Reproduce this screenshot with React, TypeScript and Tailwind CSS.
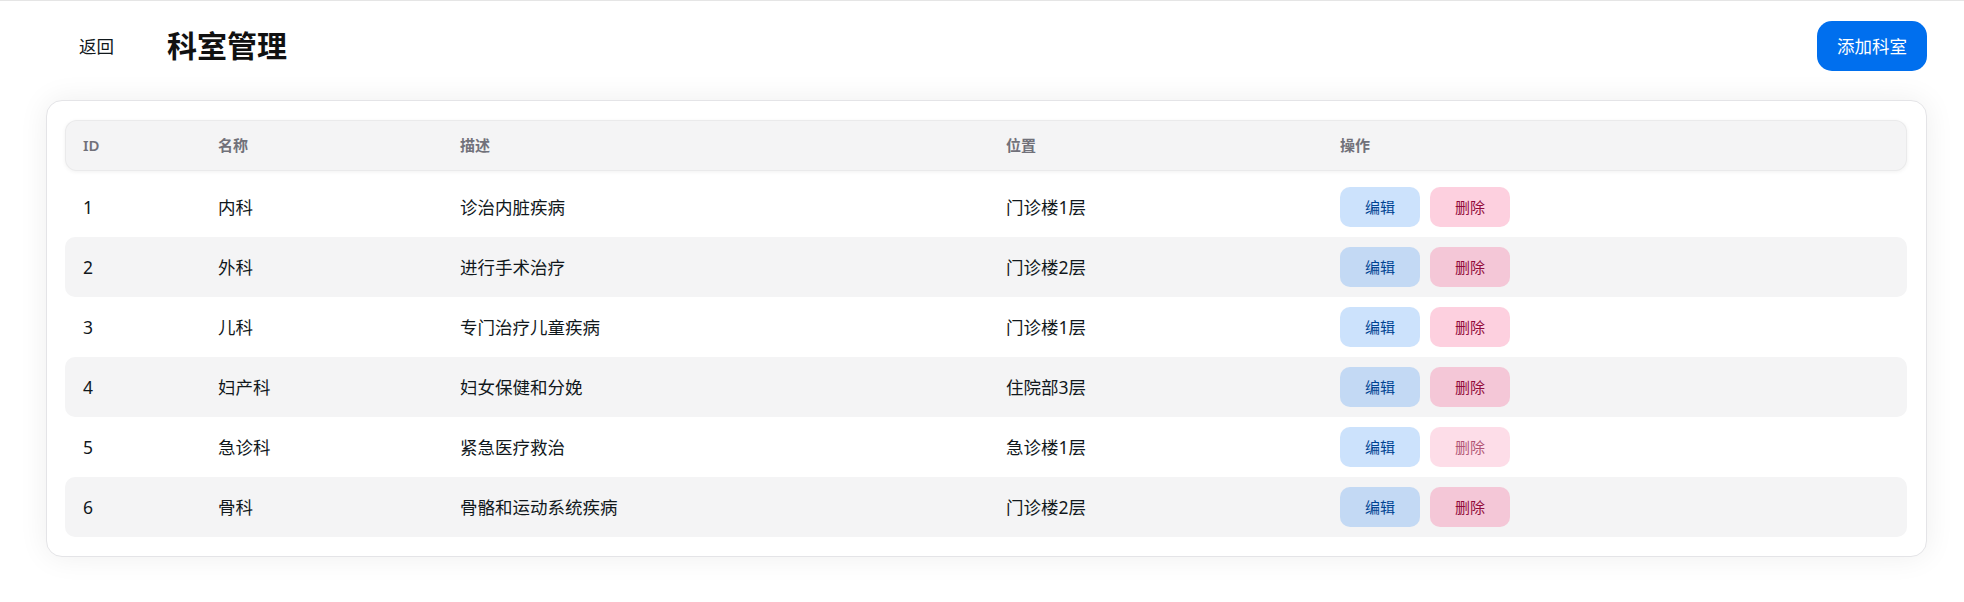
import React from "react";

type Dept = { id: number; name: string; desc: string; location: string };

const departments: Dept[] = [
  { id: 1, name: "内科", desc: "诊治内脏疾病", location: "门诊楼1层" },
  { id: 2, name: "外科", desc: "进行手术治疗", location: "门诊楼2层" },
  { id: 3, name: "儿科", desc: "专门治疗儿童疾病", location: "门诊楼1层" },
  { id: 4, name: "妇产科", desc: "妇女保健和分娩", location: "住院部3层" },
  { id: 5, name: "急诊科", desc: "紧急医疗救治", location: "急诊楼1层" },
  { id: 6, name: "骨科", desc: "骨骼和运动系统疾病", location: "门诊楼2层" },
];

const cols = "grid grid-cols-[135px_242px_546px_334px_1fr]";

export default function App() {
  return (
    <div className="min-h-[602px] bg-white font-['Noto_Sans','Noto_Sans_CJK_SC',sans-serif] text-[#11181c]">
      <div className="h-px bg-[#e5e5e5]" />
      <div className="pl-[46px] pr-[37px]">
        <header className="mt-[20px] flex h-[50px] items-center">
          <button className="ml-[33px] text-[17.5px] leading-6 text-[#11181c]">返回</button>
          <h1 className="ml-[53px] text-[30px] font-bold leading-9 text-[#111]">科室管理</h1>
          <button className="ml-auto flex h-[50px] w-[110px] items-center justify-center rounded-[15px] bg-[#006fee] text-[17.5px] leading-7 text-white">
            添加科室
          </button>
        </header>

        <section className="mt-[29px] rounded-[16px] border border-[#e4e4e7] bg-white py-[19px] pl-[18px] pr-[19px] shadow-[0_0_30px_rgba(0,0,0,0.07)]">
          <div
            className={`${cols} h-[51px] items-center rounded-[12px] border border-black/[0.04] bg-[#f4f4f5] text-[15px] font-semibold text-[#71717a] shadow-[0_1px_4px_rgba(0,0,0,0.06)]`}
          >
            <div className="px-[17px]">ID</div>
            <div className="px-[17px]">名称</div>
            <div className="px-[17px]">描述</div>
            <div className="px-[17px]">位置</div>
            <div className="px-[17px]">操作</div>
          </div>

          <div className="mt-[6px]">
            {departments.map((d, i) => (
              <div
                key={d.id}
                className={`${cols} h-[60px] items-center rounded-[10px] text-[17.5px] ${
                  i % 2 === 1 ? "bg-[#f4f4f5]" : "bg-white"
                }`}
              >
                <div className="px-[18px]">{d.id}</div>
                <div className="px-[18px]">{d.name}</div>
                <div className="px-[18px]">{d.desc}</div>
                <div className="px-[18px]">{d.location}</div>
                <div className="flex gap-[10px] px-[18px]">
                  <button className="flex h-[40px] w-[80px] items-center justify-center rounded-[10px] bg-[#006fee]/20 text-[15px] text-[#004493]">
                    编辑
                  </button>
                  <button
                    className={`flex h-[40px] w-[80px] items-center justify-center rounded-[10px] bg-[#f31260]/20 text-[15px] text-[#920b3a] ${
                      d.id === 5 ? "opacity-70" : ""
                    }`}
                  >
                    删除
                  </button>
                </div>
              </div>
            ))}
          </div>
        </section>
      </div>
    </div>
  );
}
